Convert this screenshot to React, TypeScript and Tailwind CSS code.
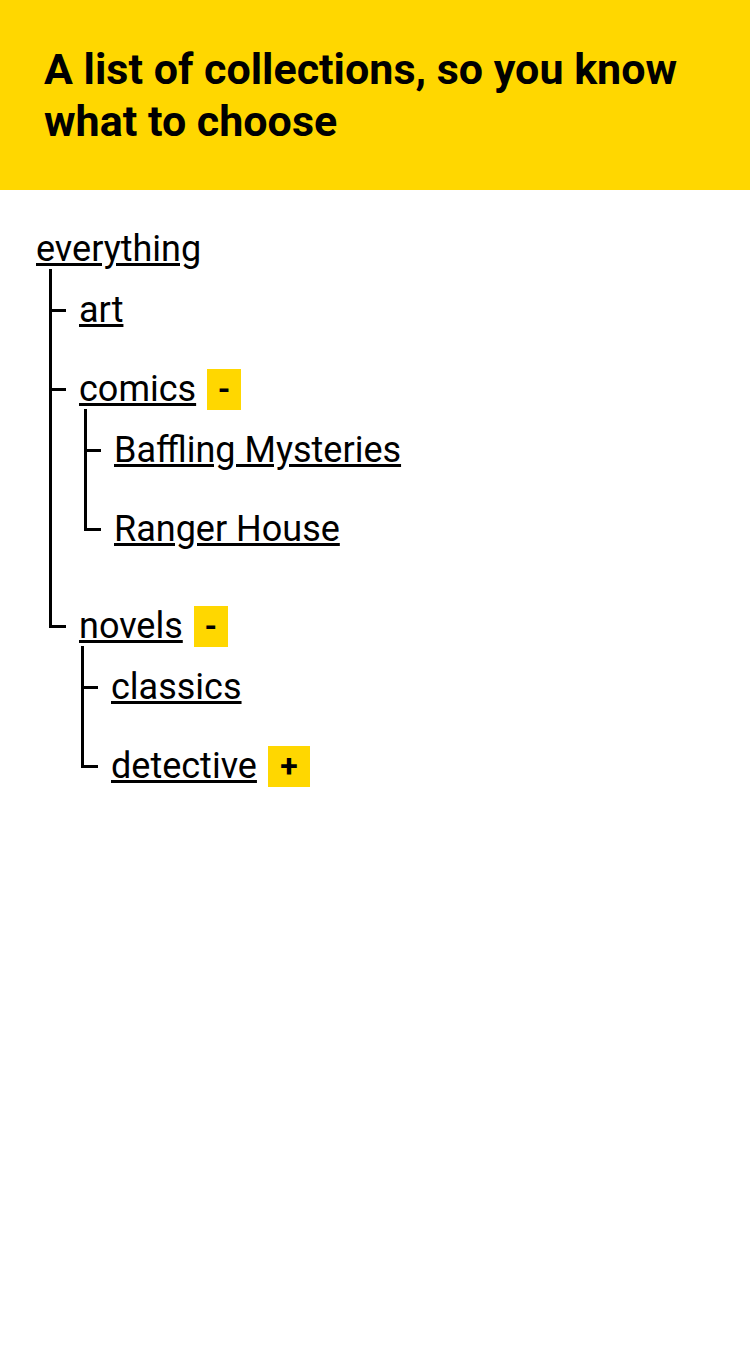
import React from "react";

type Node = {
  label: string;
  toggle?: "-" | "+";
  indent?: string;
  children?: Node[];
};

const TREE: Node = {
  label: "everything",
  indent: "ml-[13px]",
  children: [
    { label: "art" },
    {
      label: "comics",
      toggle: "-",
      indent: "ml-[5px]",
      children: [{ label: "Baffling Mysteries" }, { label: "Ranger House" }],
    },
    {
      label: "novels",
      toggle: "-",
      indent: "ml-[2px]",
      children: [{ label: "classics" }, { label: "detective", toggle: "+" }],
    },
  ],
};

const Row: React.FC<{ node: Node }> = ({ node }) => (
  <div className="flex items-center h-[40px]">
    <a href="#" className="text-[36px] leading-[40px] text-black underline whitespace-nowrap">
      {node.label}
    </a>
    {node.toggle && (
      <button
        className={`ml-[11px] h-[41px] shrink-0 flex items-center justify-center bg-[#ffd700] text-black text-[32px] font-bold leading-none ${
          node.toggle === "+" ? "w-[42px]" : "w-[34px]"
        }`}
      >
        {node.toggle}
      </button>
    )}
  </div>
);

const Item: React.FC<{ node: Node; last: boolean }> = ({ node, last }) => (
  <li className="flex">
    {/* connector: trunk + tick, or elbow for the last child */}
    <div className={last ? "w-[30px] shrink-0" : "w-[30px] shrink-0 border-l-[3px] border-black"}>
      {last ? (
        <div className="h-[42.5px] w-[17px] border-l-[3px] border-b-[3px] border-black" />
      ) : (
        <div className="mt-[39.5px] h-[3px] w-[14px] bg-black" />
      )}
    </div>
    <div className="flex flex-col pt-[21px] pb-[18px]">
      <Row node={node} />
      {node.children && <List nodes={node.children} indent={node.indent} />}
    </div>
  </li>
);

const List: React.FC<{ nodes: Node[]; indent?: string }> = ({ nodes, indent }) => (
  <ul className={`flex flex-col ${indent ?? ""}`}>
    {nodes.map((n, i) => (
      <Item key={n.label} node={n} last={i === nodes.length - 1} />
    ))}
  </ul>
);

export default function App() {
  return (
    <div className="min-h-screen bg-white font-['Roboto',sans-serif] text-black">
      <header className="bg-[#ffd700] px-[44px] py-[43px]">
        <h1 className="text-[43px] font-bold leading-[52px]">
          A list of collections, so you know what to choose
        </h1>
      </header>
      <div className="pt-[18px] pl-[36px]">
        <div className="pt-[21px] flex flex-col">
          <Row node={TREE} />
          <List nodes={TREE.children!} indent={TREE.indent} />
        </div>
      </div>
    </div>
  );
}
